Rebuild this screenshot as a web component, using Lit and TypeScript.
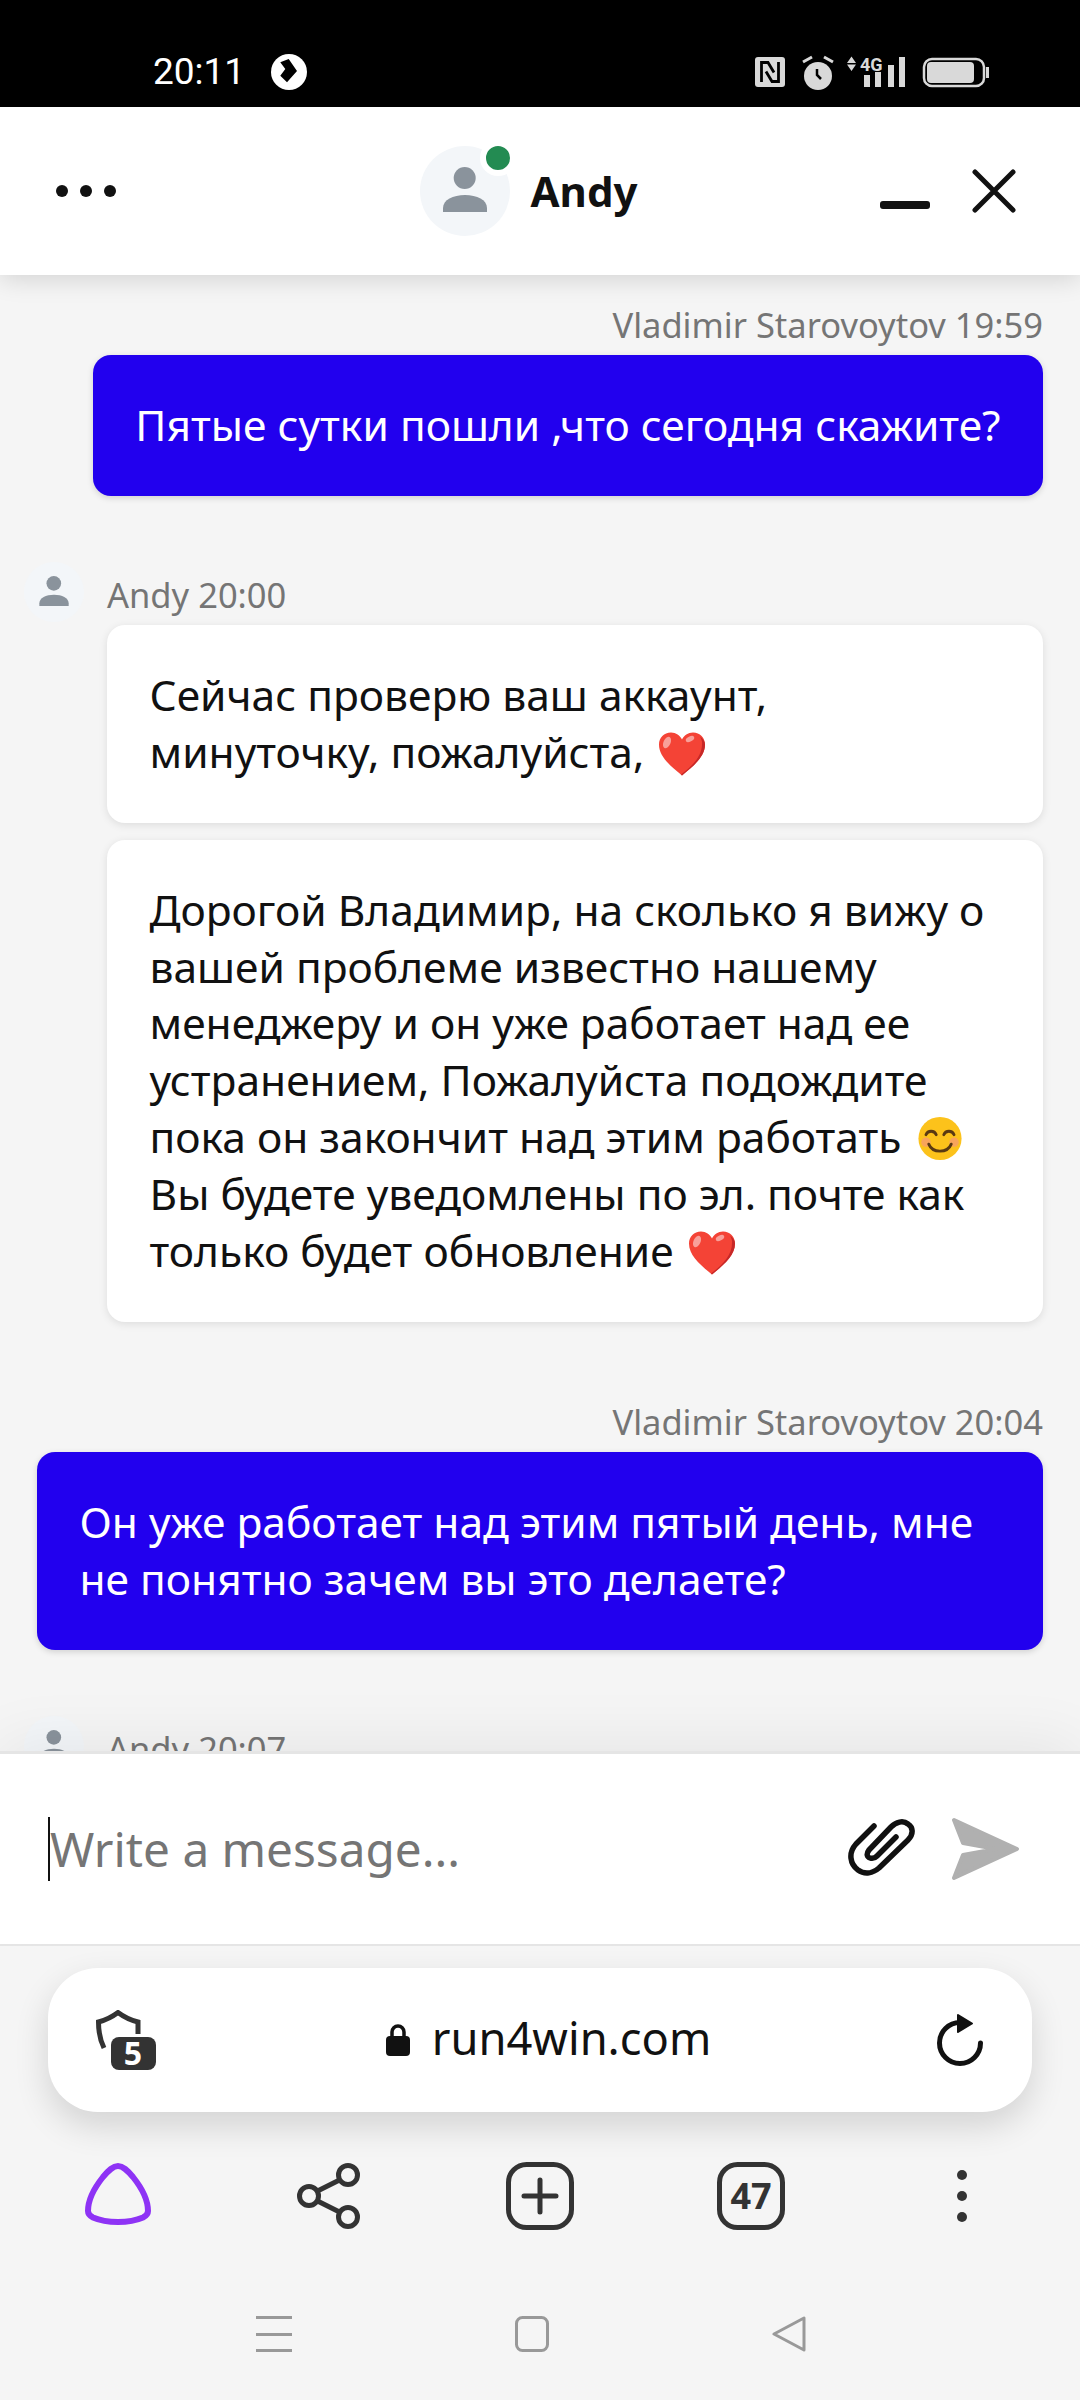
import { LitElement, html, css } from "lit";
import { customElement } from "lit/decorators.js";

const person = html`<svg class="person" viewBox="0 0 90 90"><circle cx="44.700" cy="32" r="11" fill="#8a939c"/><path d="M23 66v-4c0-8 10-13 22-13s22 5 22 13v4z" fill="#8a939c"/></svg>`;
const heart = html`<svg class="emo" viewBox="0 0 48 44"><path d="M24 44C12 34 1 25 1 13 1 6 6 1 13 1c5 0 9 3 11 7 2-4 6-7 11-7 7 0 12 5 12 12 0 12-11 21-23 31z" fill="#f44336"/><path d="M47 13c0 12-11 21-23 31l-1-1C35 34 45 24 44 10c-.500-2-1-3-2-5 3 2 5 5 5 8z" fill="#c62828"/><ellipse cx="9" cy="11" rx="3.500" ry="6" transform="rotate(25 9 11)" fill="#f8a09a"/><ellipse cx="32" cy="7.500" rx="4.500" ry="2.500" transform="rotate(-25 32 7.500)" fill="#f8a09a"/></svg>`;
const smile = html`<svg class="emo" viewBox="0 0 48 48"><circle cx="24" cy="24" r="23" fill="#fcc21b"/><path d="M9 20c2-5 9-5 11 0M28 20c2-5 9-5 11 0" fill="none" stroke="#5a3a12" stroke-width="3" stroke-linecap="round"/><circle cx="9" cy="28" r="5" fill="#f79a72" opacity=".75"/><circle cx="39" cy="28" r="5" fill="#f79a72" opacity=".75"/><path d="M12 30c4 10 20 10 24 0" fill="none" stroke="#5a3a12" stroke-width="3" stroke-linecap="round"/></svg>`;

@customElement("app-root")
export class AppRoot extends LitElement {
  static styles = css`
    :host { display: block; width: 1080px; height: 2400px; overflow: hidden; background: #f5f5f5; font-family: "Noto Sans", "Open Sans", sans-serif; color: #111; }
    .page { display: flex; flex-direction: column; height: 2400px; }

    .status { flex: 0 0 107px; background: #000; display: flex; align-items: center; justify-content: space-between; padding: 0 91px 0 153px; box-sizing: border-box; }
    .status-left { display: flex; align-items: center; gap: 26px; margin-top: 37px; color: #fff; font: 400 37px/40px Roboto, sans-serif; }
    .status-right { margin-top: 37px; display: block; }

    .head { flex: 0 0 168px; background: #fff; display: flex; align-items: center; justify-content: space-between; padding: 0 64px 0 56px; box-shadow: 0 4px 24px rgba(0,0,0,.14); position: relative; z-index: 3; box-sizing: border-box; }
    .dots { display: flex; gap: 12px; }
    .dots i { width: 12px; height: 12px; border-radius: 50%; background: #111; }
    .agent { display: flex; align-items: center; gap: 21px; margin-left: 61px; }
    .avatar { width: 90px; height: 90px; border-radius: 50%; background: #f3f6f9; position: relative; }
    .avatar .person { width: 90px; height: 90px; }
    .online { position: absolute; width: 24px; height: 24px; border-radius: 50%; background: #238b52; border: 6px solid #fff; left: 60px; top: -6px; }
    .name { font-size: 42px; font-weight: 700; line-height: 50px; }
    .win { display: flex; align-items: center; gap: 42px; }
    .close-ic { stroke: #111; stroke-width: 5; stroke-linecap: round; }

    .chat { flex: 1 1 0; min-height: 0; overflow: hidden; padding: 27px 37px 0 37px; display: flex; flex-direction: column; position: relative; }
    .meta { font-size: 34.500px; line-height: 46px; color: #757575; }
    .out { display: flex; flex-direction: column; align-items: flex-end; gap: 7px; margin-bottom: 66px; }
    .bubble { font-size: 42.500px; line-height: 56.890px; border-radius: 18px; padding: 42px 42.500px; box-sizing: border-box; }
    .blue { background: #2200ee; color: #fff; box-shadow: 0 2px 6px rgba(0,0,0,.15); }
    .wide { align-self: stretch; }
    .white { background: #fff; color: #111; box-shadow: 0 2px 8px rgba(0,0,0,.1); }
    .in { display: grid; grid-template-columns: 60px 1fr; column-gap: 23px; margin-bottom: 77px; align-items: start; margin-left: -13px; }
    .in-body { display: flex; flex-direction: column; gap: 17px; }
    .in-meta { height: 66px; display: flex; align-items: center; margin-bottom: -20px; }
    .mini { width: 60px; height: 60px; border-radius: 50%; background: #f3f6f9; }
    .mini .person { width: 60px; height: 60px; }
    .emo { display: inline-block; width: 48px; height: 45px; vertical-align: -8px; margin-left: 3px; }

    .input { flex: 0 0 195px; background: #fff; border-top: 3px solid #e5e5e5; border-bottom: 2px solid #e5e5e5; display: flex; align-items: center; box-sizing: border-box; padding: 0 60px 0 48px; position: relative; z-index: 1; box-shadow: 0 -6px 60px rgba(0,0,0,.07); }
    .caret { width: 2px; height: 64px; background: #111; flex: none; }
    .ph { flex: 1; font-size: 47.700px; color: #757575; line-height: 64px; }
    .input-ic { display: flex; align-items: center; gap: 32px; }

    .browser { flex: 0 0 454px; display: flex; flex-direction: column; position: relative; z-index: 2; background: #f5f5f5; }
    .pill { margin: 22px 48px 0; height: 144px; background: #fff; border-radius: 50px; box-shadow: 0 14px 34px rgba(0,0,0,.14); display: flex; align-items: center; justify-content: space-between; padding: 0 49px 0 48px; box-sizing: border-box; }
    .url { display: flex; align-items: center; gap: 22px; font-size: 45.300px; line-height: 60px; color: #111; margin-left: 4px; }
    .url span { margin-top: -5px; }
    .tools { display: grid; grid-template-columns: repeat(5, 211px); justify-items: center; align-items: center; padding-left: 12px; margin-top: 50px; height: 68px; }
    .alice { align-self: start; margin-top: 1px; }
    .navbar { display: flex; align-items: center; justify-content: space-between; margin-top: 86px; padding: 0 274px 0 256px; }
    svg { display: block; flex: none; }
    .count { font: 700 36px/44px "Noto Sans", sans-serif; fill: #333; }
    .badge { font: 700 32px/34px "Noto Sans", sans-serif; fill: #fff; }
    .tiny { font: 700 18px/18px Roboto, sans-serif; fill: #d9d9d9; }
    .ico { fill: none; stroke: #333; }
  `;

  render() {
    return html`<div class="page">
      <div class="status">
        <div class="status-left"><span>20:11</span>
          <svg width="36" height="36" viewBox="0 0 36 36"><circle cx="18" cy="18" r="18" fill="#fff"/><path d="M9.300 8.300L17.700 5 26 17 16 28.300 9.300 21.700 14.300 15z" fill="#000"/></svg>
        </div>
        <svg class="status-right" width="236" height="36" viewBox="0 0 236 36">
          <rect x="2" y="3" width="30" height="30" rx="3" fill="#d9d9d9"/>
          <path d="M8.500 28V8.500h6.500l6 10M25.500 8v19.500H19l-6-10" fill="none" stroke="#000" stroke-width="2.800"/>
          <circle cx="65" cy="22" r="14" fill="#d9d9d9"/>
          <path d="M64 15v6l4 4" fill="none" stroke="#000" stroke-width="2.500"/>
          <path d="M50 8l9-5M80 8l-9-5" stroke="#d9d9d9" stroke-width="3"/>
          <path d="M94 9l4.500-6.500L103 9zM94 10.500h9L98.500 17z" fill="#d9d9d9"/>
          <text class="tiny" x="107" y="17">4G</text>
          <path d="M111 21h6v12h-6zM122 18h6v15h-6zM135 11h6v22h-6zM146 3h6v30h-6z" fill="#d9d9d9"/>
          <rect x="171" y="5" width="60" height="27" rx="8" fill="none" stroke="#d9d9d9" stroke-width="2.500"/>
          <rect x="174" y="8" width="47" height="21" rx="4" fill="#d9d9d9"/>
          <rect x="233" y="13" width="3" height="11" fill="#d9d9d9"/>
        </svg>
      </div>

      <div class="head">
        <div class="dots"><i></i><i></i><i></i></div>
        <div class="agent"><div class="avatar">${person}<span class="online"></span></div><div class="name">Andy</div></div>
        <div class="win">
          <svg width="50" height="42" viewBox="0 0 50 42"><rect y="31" width="50" height="8" rx="3" fill="#111"/></svg>
          <svg width="44" height="44" viewBox="0 0 44 44"><path class="close-ic" d="M3 3l38 38M41 3L3 41"/></svg>
        </div>
      </div>

      <div class="chat">
        <div class="out">
          <div class="meta">Vladimir Starovoytov 19:59</div>
          <div class="bubble blue">Пятые сутки пошли ,что сегодня скажите?</div>
        </div>
        <div class="in">
          <div class="mini">${person}</div>
          <div class="in-body">
            <div class="meta in-meta">Andy 20:00</div>
            <div class="bubble white">Сейчас проверю ваш аккаунт,<br>минуточку, пожалуйста, ${heart}</div>
            <div class="bubble white">Дорогой Владимир, на сколько я вижу о<br>вашей проблеме известно нашему<br>менеджеру и он уже работает над ее<br>устранением, Пожалуйста подождите<br>пока он закончит над этим работать ${smile}<br>Вы будете уведомлены по эл. почте как<br>только будет обновление ${heart}</div>
          </div>
        </div>
        <div class="out">
          <div class="meta">Vladimir Starovoytov 20:04</div>
          <div class="bubble blue wide">Он уже работает над этим пятый день, мне<br>не понятно зачем вы это делаете?</div>
        </div>
        <div class="in">
          <div class="mini">${person}</div>
          <div class="in-body"><div class="meta in-meta">Andy 20:07</div></div>
        </div>
      </div>

      <div class="input">
        <div class="caret"></div>
        <div class="ph">Write a message...</div>
        <div class="input-ic">
          <svg width="70" height="62" viewBox="10 20 70 62"><path d="M36 28L18 46C10 55 12 66 20 72C27 77 35 75 41 70L70 42C76 36 75 29 70 26C65 22 58 24 53 29L31 52C28 56 29 59 32 60C35 61 37 60 39 58L58 39" fill="none" stroke="#111" stroke-width="5.500" stroke-linecap="round" stroke-linejoin="round"/></svg>
          <svg width="70" height="64" viewBox="0 0 70 64"><path d="M4 3L67 32 4 61l9-23 33-6-33-6z" fill="#b0b0b0" stroke="#b0b0b0" stroke-width="4" stroke-linejoin="round"/></svg>
        </div>
      </div>

      <div class="browser">
        <div class="pill">
          <svg width="60" height="60" viewBox="0 0 60 60"><path class="ico" d="M8 38C4 30 2.500 22 2.500 12 10 10 16 7 22 2.500 28 7 34 10 42 12V24" stroke-width="5"/><rect x="15" y="27" width="45" height="33" rx="8" fill="#333"/><text class="badge" x="37" y="55" text-anchor="middle">5</text></svg>
          <div class="url">
            <svg width="24" height="32" viewBox="0 0 24 32"><path d="M6 14V8a6 6 0 0 1 12 0v6" fill="none" stroke="#111" stroke-width="3.500"/><rect y="12" width="24" height="20" rx="4" fill="#111"/></svg>
            <span>run4win.com</span>
          </div>
          <svg width="46" height="52" viewBox="0 0 46 52"><path d="M23 8.500A20.500 20.500 0 1 0 43.500 29" fill="none" stroke="#111" stroke-width="5" stroke-linecap="round"/><path d="M21 1L35 9.500 21 18z" fill="#111" stroke="#111" stroke-width="2" stroke-linejoin="round"/></svg>
        </div>
        <div class="tools">
          <svg class="alice" width="66" height="62" viewBox="0 0 66 62"><path d="M33 3C38 3 42 7 48 14C56 24 63 37 63 48C63 51 61 53 58 54.500C50 58 42 59 33 59C24 59 16 58 8 54.500C5 53 3 51 3 48C3 37 10 24 18 14C24 7 28 3 33 3Z" fill="none" stroke="#8e33f5" stroke-width="6"/></svg>
          <svg width="63" height="66" viewBox="0 0 63 66"><g class="ico" stroke-width="5"><circle cx="12" cy="33" r="9.500"/><circle cx="51" cy="12" r="9.500"/><circle cx="51" cy="54" r="9.500"/><path d="M20.500 28L42.500 17M20.500 38L42.500 49"/></g></svg>
          <svg width="68" height="68" viewBox="0 0 68 68"><rect class="ico" x="2.500" y="2.500" width="63" height="63" rx="18" stroke-width="5"/><path d="M34 18v32M18 34h32" stroke="#333" stroke-width="5" stroke-linecap="round"/></svg>
          <svg width="68" height="68" viewBox="0 0 68 68"><rect class="ico" x="2.500" y="2.500" width="63" height="63" rx="18" stroke-width="5"/><text class="count" x="34" y="47" text-anchor="middle">47</text></svg>
          <svg width="10" height="52" viewBox="0 0 10 52"><circle cx="5" cy="5" r="5" fill="#333"/><circle cx="5" cy="26" r="5" fill="#333"/><circle cx="5" cy="47" r="5" fill="#333"/></svg>
        </div>
        <div class="navbar">
          <svg width="36" height="36" viewBox="0 0 36 36"><path d="M0 0h36v3H0zM0 17h36v3H0zM0 33h36v3H0z" fill="#999"/></svg>
          <svg width="34" height="36" viewBox="0 0 34 36"><rect x="1.500" y="1.500" width="31" height="33" rx="6" fill="none" stroke="#999" stroke-width="3"/></svg>
          <svg width="34" height="36" viewBox="0 0 34 36"><path d="M32 2v32L2 18z" fill="none" stroke="#999" stroke-width="3" stroke-linejoin="round"/></svg>
        </div>
      </div>
    </div>`;
  }
}
